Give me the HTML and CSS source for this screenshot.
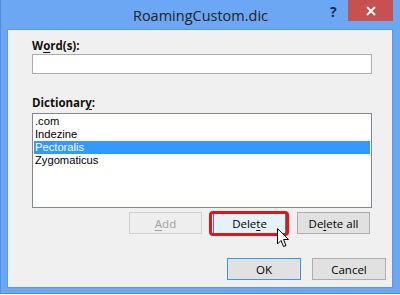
FILE: index.html
```html
<!DOCTYPE html>
<html>
<head>
<meta charset="utf-8">
<link rel="stylesheet" href="styles.css">
</head>
<body>
<div class="window">
  <div class="titlebar">
    <span class="title">RoamingCustom.dic</span>
    <span class="help">?</span>
    <span class="close"><svg width="10" height="10" viewBox="0 0 10 10"><path d="M1 1 L9 9 M9 1 L1 9" stroke="#fff" stroke-width="2"/></svg></span>
  </div>
  <div class="client">
    <div class="field">
      <div class="label">W<u>o</u>rd(s):</div>
      <div class="input"></div>
    </div>
    <div class="field dict">
      <div class="label">Dictionar<u>y</u>:</div>
      <div class="list">
        <div class="item">.com</div>
        <div class="item">Indezine</div>
        <div class="item selected">Pectoralis</div>
        <div class="item">Zygomaticus</div>
      </div>
    </div>
    <div class="row actions">
      <div class="btn disabled"><u>A</u>dd</div>
      <div class="highlight"><div class="btn hover">Dele<u>t</u>e</div>
        <svg class="cursor" width="13" height="20" viewBox="0 0 13 20"><path d="M0.5 0.5 L0.5 16 L4 12.5 L6.5 18.5 L9 17.5 L6.5 11.5 L11.5 11.5 Z" fill="#fff" stroke="#000" stroke-width="1" stroke-linejoin="miter"/></svg>
      </div>
      <div class="btn">De<u>l</u>ete all</div>
    </div>
    <div class="row footer">
      <div class="btn default">OK</div>
      <div class="btn">Cancel</div>
    </div>
  </div>
</div>
</body>
</html>
```
FILE: styles.css
```css
html, body {
  margin: 0;
  padding: 0;
}
body {
  width: 400px;
  height: 295px;
  background: #ffffff;
  font-family: "Open Sans", "Noto Sans", sans-serif;
  font-size: 11.5px;
  color: #000;
  overflow: hidden;
}
.window {
  width: 400px;
  height: 294px;
  background: #6ba7f2;
  border-left: 1px solid #4f8ee0;
  border-bottom: 1px solid #4f8ee0;
  box-sizing: border-box;
  display: flex;
  flex-direction: column;
}
.titlebar {
  height: 29px;
  position: relative;
  display: flex;
  justify-content: center;
  align-items: center;
  flex-shrink: 0;
}
.title {
  font-size: 14.5px;
  color: #222;
  margin-top: 1px;
}
.help {
  position: absolute;
  left: 329px;
  top: 2px;
  font-weight: bold;
  font-size: 14px;
  color: #1c2a48;
}
.close {
  position: absolute;
  left: 347px;
  top: 0;
  width: 45px;
  height: 21px;
  background: #c75050;
  display: flex;
  align-items: center;
  justify-content: center;
}
.client {
  margin-left: 6px;
  width: 386px;
  height: 259px;
  border: 1px solid #5a98e6;
  box-sizing: border-box;
  background: #f0f0f0;
  display: flex;
  flex-direction: column;
  padding: 8px 0 0 0;
}
.field {
  display: flex;
  flex-direction: column;
  padding-left: 24px;
}
.label {
  font-weight: bold;
  height: 16px;
  line-height: 16px;
  color: #111;
}
.input {
  width: 340px;
  height: 20px;
  box-sizing: border-box;
  background: #fff;
  border: 1px solid #abadb3;
}
.dict {
  margin-top: 21px;
}
.list {
  margin-top: 2px;
  width: 340px;
  height: 95px;
  box-sizing: border-box;
  background: #fff;
  border: 1px solid #828790;
  padding: 1px;
}
.item {
  height: 13px;
  line-height: 13px;
  padding-left: 1px;
  white-space: nowrap;
  font-family: "Liberation Sans", Arial, sans-serif;
  font-size: 11.2px;
}
.item.selected {
  background: #3399ff;
  color: #fff;
}
.row {
  display: flex;
  justify-content: flex-end;
}
.actions {
  margin-top: 4px;
  padding-right: 22px;
  gap: 11px;
}
.footer {
  margin-top: 24px;
  padding-right: 6px;
  gap: 11px;
}
.btn {
  width: 73px;
  height: 22px;
  box-sizing: border-box;
  border: 1px solid #adadad;
  background: #e1e1e1;
  display: flex;
  align-items: center;
  justify-content: center;
  color: #000;
}
.btn.disabled {
  border-color: #cfcfcf;
  background: #eeeeee;
  color: #a0a0a0;
}
.btn.hover {
  border-color: #3c7fb1;
  background: #e5f1fb;
}
.btn.default {
  border-color: #3399ff;
}
.footer .btn {
  width: 74px;
}
.highlight {
  position: relative;
}
.highlight::after {
  content: "";
  position: absolute;
  left: -4px;
  right: -3px;
  top: -1px;
  bottom: -2px;
  border: 3px solid #e8101a;
  border-radius: 4px;
  pointer-events: none;
}
.cursor {
  position: absolute;
  left: 64px;
  top: 16px;
  z-index: 2;
}
u {
  text-decoration-thickness: 1px;
  text-underline-offset: 2px;
}
```
